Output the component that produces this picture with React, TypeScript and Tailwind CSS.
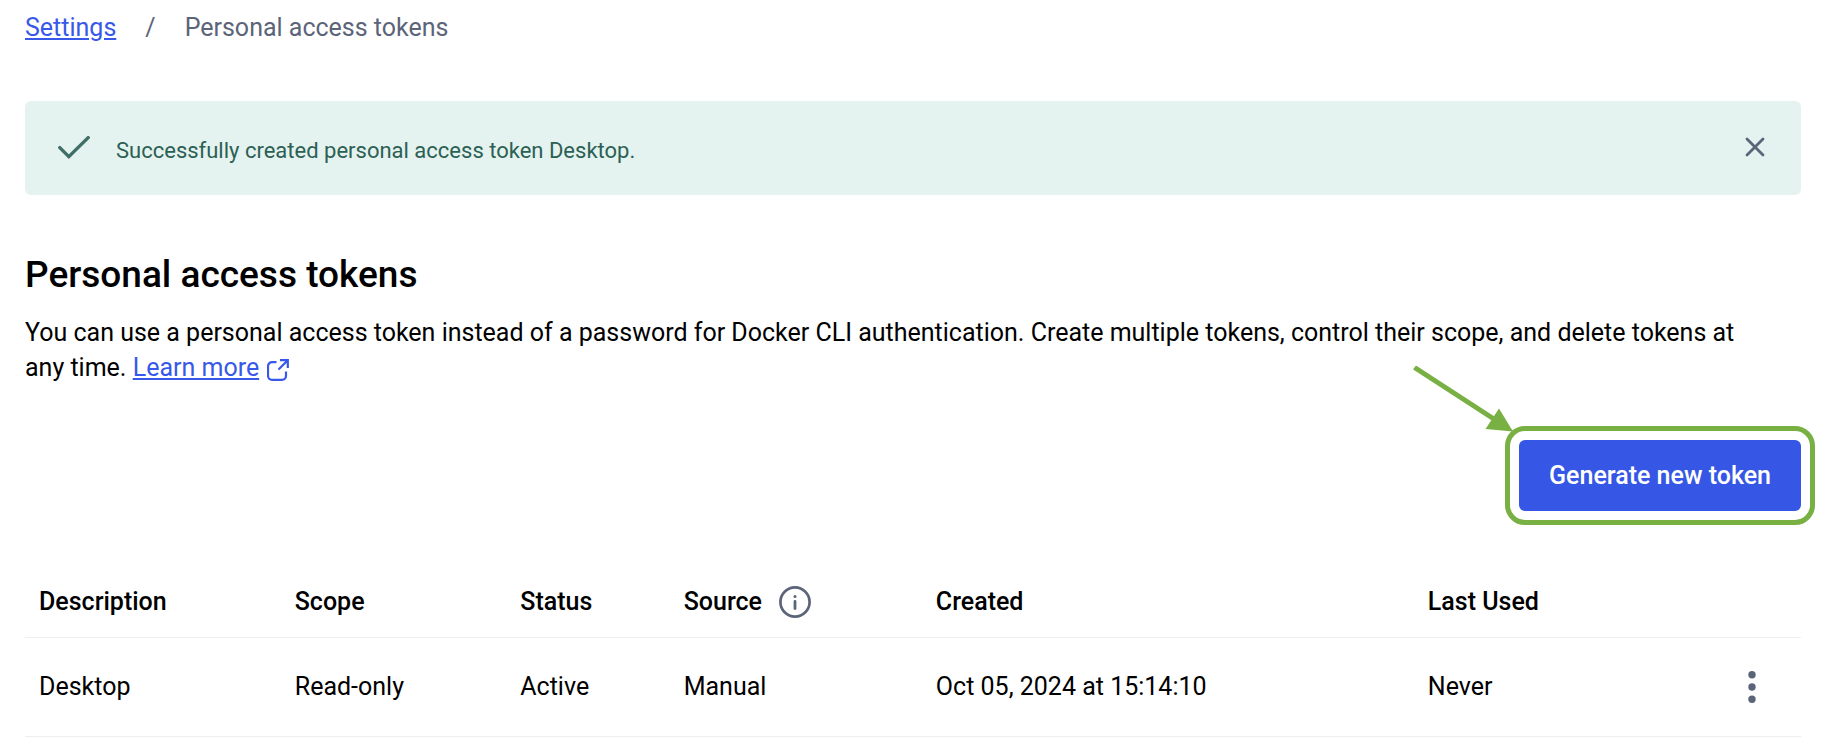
import { useState } from "react";

const tokens = [
  {
    description: "Desktop",
    scope: "Read-only",
    status: "Active",
    source: "Manual",
    created: "Oct 05, 2024 at 15:14:10",
    lastUsed: "Never",
  },
];

function CheckIcon() {
  return (
    <svg width="32" height="24" viewBox="0 0 32 24" fill="none" aria-hidden="true">
      <path d="M1.8 11.6 10.8 20.6 30.2 1.6" stroke="#3f6f66" strokeWidth="3.4" strokeLinecap="round" />
    </svg>
  );
}

function CloseIcon() {
  return (
    <svg width="20" height="20" viewBox="0 0 20 20" fill="none" aria-hidden="true">
      <path d="M2 2 18 18M18 2 2 18" stroke="#5b6479" strokeWidth="2.8" strokeLinecap="round" />
    </svg>
  );
}

function ExternalLinkIcon() {
  return (
    <svg
      className="ml-2 inline-block align-[-5px]"
      width="22"
      height="22"
      viewBox="0 0 22 22"
      fill="none"
      stroke="#3858e9"
      strokeWidth="2.2"
      aria-hidden="true"
    >
      <path d="M9.5 3.2H5a4 4 0 0 0-4 4v9.600a4 4 0 0 0 4 4h10a4 4 0 0 0 4-4V12.500" />
      <path d="M13 1.200h7.800V9M20.500 1.500 11.500 10.500" />
    </svg>
  );
}

function InfoIcon() {
  return (
    <svg width="32" height="32" viewBox="0 0 32 32" fill="none" aria-hidden="true">
      <circle cx="16" cy="16" r="14.6" stroke="#5b6479" strokeWidth="2.7" />
      <circle cx="16" cy="10.5" r="1.5" fill="#5b6479" />
      <path d="M16 15.5v7" stroke="#5b6479" strokeWidth="2.8" strokeLinecap="round" />
    </svg>
  );
}

function MoreIcon() {
  return (
    <svg width="8" height="32" viewBox="0 0 8 32" fill="#5b6479" aria-hidden="true">
      <circle cx="4" cy="3.8" r="3.7" />
      <circle cx="4" cy="16" r="3.7" />
      <circle cx="4" cy="28.2" r="3.7" />
    </svg>
  );
}

function Pointer() {
  return (
    <svg
      className="pointer-events-none absolute right-full bottom-full"
      width="106"
      height="74"
      viewBox="0 0 106 74"
      fill="none"
      aria-hidden="true"
    >
      <path d="M1.5 1.5 84 55" stroke="#78b043" strokeWidth="5" />
      <path d="M86 42.5 72.5 63 100 65.5Z" fill="#78b043" />
    </svg>
  );
}

export default function App() {
  const [showNotice, setShowNotice] = useState(true);

  return (
    <main className="bg-white pt-2 pr-8 pb-3 pl-[25px] font-['Roboto',sans-serif] text-[25px] leading-[35px] text-black">
      <nav aria-label="Breadcrumb">
        <ol className="flex items-center gap-[29px] pt-[2px] text-[#5b6479]">
          <li>
            <a href="#settings" className="text-[#3858e9] underline underline-offset-2">
              Settings
            </a>
          </li>
          <li aria-hidden="true">/</li>
          <li aria-current="page">Personal access tokens</li>
        </ol>
      </nav>

      {showNotice && (
        <div role="status" className="mt-14 flex h-[94px] items-center rounded-md bg-[#e4f3ef] pr-9 pl-[33px]">
          <CheckIcon />
          <p className="ml-[26px] flex-1 pt-1 text-[22px] text-[#2c6054]">
            Successfully created personal access token Desktop.
          </p>
          <button
            type="button"
            aria-label="Dismiss"
            className="cursor-pointer pb-[2px]"
            onClick={() => setShowNotice(false)}
          >
            <CloseIcon />
          </button>
        </div>
      )}

      <h1 className="mt-14 text-[37px] leading-[48px] font-medium">Personal access tokens</h1>
      <p className="mt-4 pr-8">
        You can use a personal access token instead of a password for Docker CLI authentication. Create multiple tokens,
        control their scope, and delete tokens at any time.{" "}
        <a href="#learn-more" className="whitespace-nowrap text-[#3858e9] underline underline-offset-2">
          Learn more
          <ExternalLinkIcon />
        </a>
      </p>

      <div className="mt-[55px] flex justify-end">
        <div className="relative">
          <button
            type="button"
            className="h-[71px] cursor-pointer rounded-md bg-[#3657e5] px-[30px] font-medium text-white outline-[5px] outline-offset-[9px] outline-[#78b043]"
          >
            Generate new token
          </button>
          <Pointer />
        </div>
      </div>

      <table className="mt-14 w-full table-fixed text-left">
        <colgroup>
          <col className="w-[14.4%]" />
          <col className="w-[12.7%]" />
          <col className="w-[9.2%]" />
          <col className="w-[14.2%]" />
          <col className="w-[27.7%]" />
          <col className="w-[16%]" />
          <col />
        </colgroup>
        <thead>
          <tr className="h-[70px] border-b border-[#eeeeee]">
            <th className="px-[14px] font-medium">Description</th>
            <th className="px-[14px] font-medium">Scope</th>
            <th className="px-[14px] font-medium">Status</th>
            <th className="px-[14px] font-medium">
              <span className="flex items-center gap-[17px]">
                Source
                <button type="button" aria-label="About token sources" className="cursor-pointer">
                  <InfoIcon />
                </button>
              </span>
            </th>
            <th className="px-[14px] font-medium">Created</th>
            <th className="px-[14px] font-medium">Last Used</th>
            <td />
          </tr>
        </thead>
        <tbody>
          {tokens.map((token) => (
            <tr key={token.description} className="h-[99px] border-b border-[#eeeeee]">
              <td className="px-[14px]">{token.description}</td>
              <td className="px-[14px]">{token.scope}</td>
              <td className="px-[14px]">{token.status}</td>
              <td className="px-[14px]">{token.source}</td>
              <td className="px-[14px]">{token.created}</td>
              <td className="px-[14px]">{token.lastUsed}</td>
              <td className="pr-[45px]">
                <button type="button" aria-label="Token actions" className="ml-auto block cursor-pointer">
                  <MoreIcon />
                </button>
              </td>
            </tr>
          ))}
        </tbody>
      </table>
    </main>
  );
}
